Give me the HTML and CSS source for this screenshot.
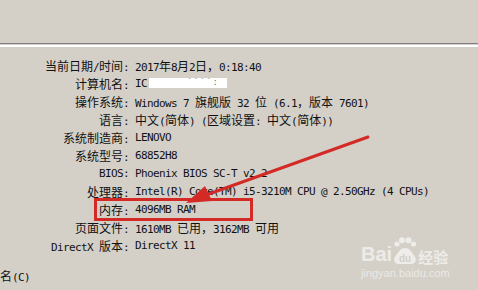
FILE: index.html
```html
<!DOCTYPE html>
<html>
<head>
<meta charset="utf-8">
<link rel="stylesheet" href="styles.css">
</head>
<body>
<div class="screen">
  <div class="top"></div>
  <div class="sep"></div>
  <div class="info">
    <div class="lbl"><span class="c">当前日期</span>/<span class="c">时间</span>:</div>
    <div class="val">2017<span class="c">年</span>8<span class="c">月</span>2<span class="c">日，</span>0:18:40</div>

    <div class="lbl"><span class="c">计算机名</span>:</div>
    <div class="val">IC<span class="redact"><span class="dots">˙˙˙˙:</span></span></div>

    <div class="lbl"><span class="c">操作系统</span>:</div>
    <div class="val">Windows 7 <span class="c">旗舰版</span> 32 <span class="c">位</span> (6.1<span class="c">，版本</span> 7601)</div>

    <div class="lbl"><span class="c">语言</span>:</div>
    <div class="val"><span class="c">中文</span>(<span class="c">简体</span>) (<span class="c">区域设置</span>: <span class="c">中文</span>(<span class="c">简体</span>))</div>

    <div class="lbl"><span class="c">系统制造商</span>:</div>
    <div class="val">LENOVO</div>

    <div class="lbl"><span class="c">系统型号</span>:</div>
    <div class="val">68852H8</div>

    <div class="lbl">BIOS:</div>
    <div class="val">Phoenix BIOS SC-T v2.2</div>

    <div class="lbl"><span class="c">处理器</span>:</div>
    <div class="val">Intel(R) Core(TM) i5-3210M CPU @ 2.50GHz (4 CPUs)</div>

    <div class="lbl"><span class="c">内存</span>:</div>
    <div class="val">4096MB RAM</div>

    <div class="lbl"><span class="c">页面文件</span>:</div>
    <div class="val">1610MB <span class="c">已用，</span>3162MB <span class="c">可用</span></div>

    <div class="lbl">DirectX <span class="c">版本</span>:</div>
    <div class="val">DirectX 11</div>
  </div>
  <div class="bottom"><span class="c">名</span>(C)</div>

  <div class="hilite"></div>
  <svg class="arrow" width="478" height="290" viewBox="0 0 478 290">
    <line x1="368" y1="137" x2="206" y2="195" stroke="#d42a26" stroke-width="3" stroke-linecap="round"/>
    <polygon points="186,203 212,201 205,186" fill="#d42a26"/>
  </svg>

  <div class="mark">
    <div class="mark-top">
      <span class="bai">Bai</span>
      <svg class="paw" width="24" height="28" viewBox="0 0 24 28">
        <circle cx="4" cy="7" r="2.6"/>
        <circle cx="9" cy="3.2" r="3"/>
        <circle cx="15.5" cy="3.2" r="3"/>
        <circle cx="20.5" cy="7" r="2.6"/>
        <path d="M12 11 C7 11 5 16 2.5 19 C0 22 1 27 6 27 L18 27 C23 27 24 22 21.5 19 C19 16 17 11 12 11 Z"/>
        <text x="12" y="25" text-anchor="middle" class="du">du</text>
      </svg>
      <span class="jy">经验</span>
    </div>
    <div class="url">jingyan.baidu.com</div>
  </div>
</div>
</body>
</html>
```

FILE: styles.css
```css
html, body {
  margin: 0;
  padding: 0;
  background: #d4d0c8;
}

.screen {
  position: relative;
  width: 478px;
  height: 290px;
  overflow: hidden;
  background: #d4d0c8;
  color: #111;
  font-family: "DejaVu Sans Mono", "Noto Sans CJK SC", monospace;
  font-size: 11px;
  letter-spacing: -0.62px;
}

.c {
  font-family: "Noto Sans CJK SC", sans-serif;
  font-size: 12px;
  letter-spacing: 0;
}

.top {
  height: 43px;
}

.sep {
  height: 1px;
  background: #808080;
  border-bottom: 1px solid #d4d0c8;
  box-shadow: 0 2px 0 #ffffff;
}

.info {
  display: grid;
  grid-template-columns: 129px auto;
  column-gap: 6px;
  grid-auto-rows: 18px;
  line-height: 18px;
  padding-top: 12px;
  white-space: pre;
}

.lbl {
  justify-self: end;
}

.val {
  justify-self: start;
}

.redact {
  display: inline-block;
  width: 78px;
  height: 10px;
  margin-left: 2px;
  background: #ffffff;
  vertical-align: -1px;
  position: relative;
}

.dots {
  position: absolute;
  right: 8px;
  top: -5px;
  font-size: 9px;
  color: #777;
  letter-spacing: 1px;
}

.bottom {
  margin-top: 12px;
  line-height: 18px;
  white-space: pre;
}

.hilite {
  position: absolute;
  left: 94px;
  top: 198px;
  width: 159px;
  height: 23px;
  box-sizing: border-box;
  border: 3px solid #d42a26;
}

.arrow {
  position: absolute;
  left: 0;
  top: 0;
  pointer-events: none;
}

.mark {
  position: absolute;
  left: 361px;
  top: 236px;
  width: 90px;
  color: rgba(255, 255, 255, 0.62);
  letter-spacing: 0;
}

.mark-top {
  display: flex;
  align-items: flex-end;
  height: 29px;
}

.bai {
  font-family: "Liberation Sans", Arial, sans-serif;
  font-weight: bold;
  font-size: 20px;
  line-height: 20px;
  margin-bottom: 1px;
}

.paw {
  display: block;
  fill: rgba(255, 255, 255, 0.62);
  margin-left: 1px;
}

.du {
  font-family: "Liberation Sans", Arial, sans-serif;
  font-weight: bold;
  font-size: 10px;
  fill: #d4d0c8;
}

.jy {
  font-family: "Noto Sans CJK SC", sans-serif;
  font-weight: bold;
  font-size: 15px;
  line-height: 17px;
  margin-left: 1px;
}

.url {
  font-family: "Liberation Sans", Arial, sans-serif;
  font-size: 11px;
  line-height: 12px;
  margin-top: 2px;
  color: rgba(255, 255, 255, 0.55);
}
```
